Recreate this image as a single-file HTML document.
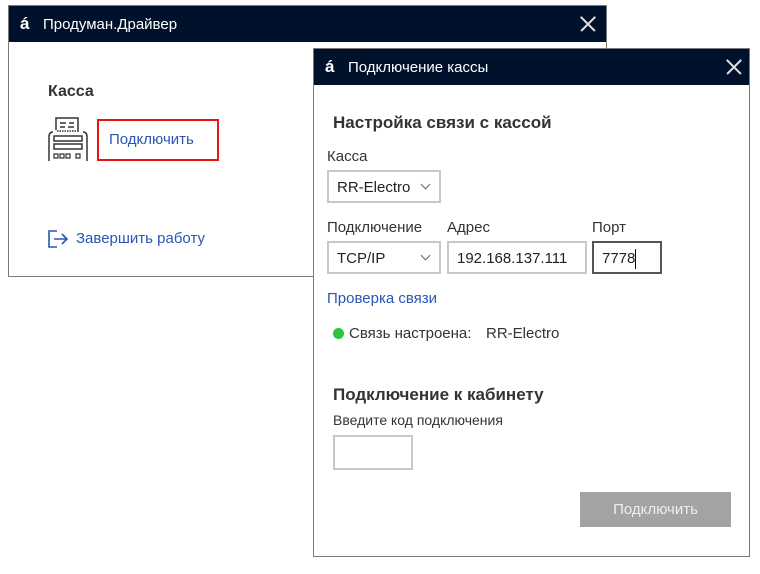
<!DOCTYPE html>
<html><head><meta charset="utf-8"><style>
*{margin:0;padding:0;box-sizing:border-box}
body{width:760px;height:574px;background:#fff;position:relative;overflow:hidden;font-family:"Segoe UI","Liberation Sans","Noto Sans CJK SC",sans-serif;color:#222}
.a{position:absolute}
.win{position:absolute;background:#fff;border:1px solid #7a7a7a}
.tb{position:absolute;left:0;right:0;top:0;height:36px;background:#00112c;color:#fff;font-size:15px}
.tb .l{position:absolute;left:11px;top:8px;font-weight:bold;font-size:17px}
.tb .t{position:absolute;left:34px;top:10px}
.x{position:absolute;width:16px;height:16px}
.x:before,.x:after{content:"";position:absolute;left:-2px;top:7px;width:20px;height:1.5px;background:#ddd;transform:rotate(45deg)}
.x:after{transform:rotate(-45deg)}
.box{position:absolute;border:2px solid #c8c8c8;background:#fff;font-size:15px;padding-left:8px;line-height:31px;height:33px}
.chev{position:absolute;right:10px;top:9px;width:7px;height:7px;border-right:1px solid #666;border-bottom:1px solid #666;transform:rotate(45deg)}
.lb{font-size:15px;color:#333}
</style></head><body>

<div class="win" style="left:8px;top:5px;width:599px;height:272px">
  <div class="tb"><span class="l">á</span><span class="t">Продуман.Драйвер</span><div class="x" style="left:571px;top:10px"></div></div>
  <div class="a" style="left:39px;top:77px;font-size:16px;font-weight:bold;color:#333">Касса</div>
  <svg class="a" style="left:38px;top:110px" width="42" height="46" viewBox="0 0 42 46" fill="none" stroke="#333" stroke-width="1.5">
    <path d="M9 14V2h22v14"/><path d="M13 7h6M22 7h5M13 11h5M21 11h6"/>
    <path d="M10 15h20" stroke-dasharray="1.5 1"/>
    <path d="M6 16c-3 0-4 2-4 5v24M36 16c3 0 4 2 4 5v24"/>
    <rect x="7" y="20" width="28" height="5"/><rect x="7" y="28" width="28" height="5"/>
    <path d="M7 38h4v4H7zM13 38h4v4h-4zM19 38h4v4h-4zM29 38h4v4h-4z" stroke-width="1.2"/>
  </svg>
  <div class="a" style="left:88px;top:113px;width:122px;height:42px;border:2px solid #e11;"></div>
  <div class="a" style="left:100px;top:125px;font-size:15px;color:#2a55b5">Подключить</div>
  <svg class="a" style="left:38px;top:223px" width="22" height="20" viewBox="0 0 22 20" fill="none" stroke="#2a55b5" stroke-width="1.6"><path d="M10 2H2v16h8"/><path d="M7 10h13M15 5l5 5-5 5"/></svg>
  <div class="a" style="left:67px;top:224px;font-size:15px;color:#2a55b5">Завершить работу</div>
</div>

<div class="win" style="left:313px;top:48px;width:437px;height:509px">
  <div class="tb"><span class="l">á</span><span class="t">Подключение кассы</span><div class="x" style="left:412px;top:10px"></div></div>
  <div class="a" style="left:19px;top:64px;font-size:17px;font-weight:bold;color:#333">Настройка связи с кассой</div>
  <div class="a lb" style="left:13px;top:99px">Касса</div>
  <div class="box" style="left:13px;top:121px;width:114px">RR-Electro<div class="chev"></div></div>
  <div class="a lb" style="left:13px;top:170px">Подключение</div>
  <div class="a lb" style="left:133px;top:170px">Адрес</div>
  <div class="a lb" style="left:278px;top:170px">Порт</div>
  <div class="box" style="left:13px;top:192px;width:114px">TCP/IP<div class="chev"></div></div>
  <div class="box" style="left:133px;top:192px;width:140px">192.168.137.111</div>
  <div class="box" style="left:278px;top:192px;width:70px;border-color:#555">7778<span style="display:inline-block;width:1px;height:20px;background:#000;vertical-align:middle"></span></div>
  <div class="a" style="left:13px;top:241px;font-size:15px;color:#2a55b5">Проверка связи</div>
  <div class="a" style="left:19px;top:279px;width:11px;height:11px;border-radius:50%;background:#2ec43a"></div>
  <div class="a lb" style="left:35px;top:276px">Связь настроена:</div>
  <div class="a lb" style="left:172px;top:276px">RR-Electro</div>
  <div class="a" style="left:19px;top:336px;font-size:17px;font-weight:bold;color:#333">Подключение к кабинету</div>
  <div class="a lb" style="left:19px;top:363px;font-size:14px">Введите код подключения</div>
  <div class="a" style="left:19px;top:386px;width:80px;height:35px;border:2px solid #c8c8c8"></div>
  <div class="a" style="left:266px;top:443px;width:151px;height:35px;background:#a3a3a3;color:#eee;font-size:15px;text-align:center;line-height:36px">Подключить</div>
</div>
</body></html>
